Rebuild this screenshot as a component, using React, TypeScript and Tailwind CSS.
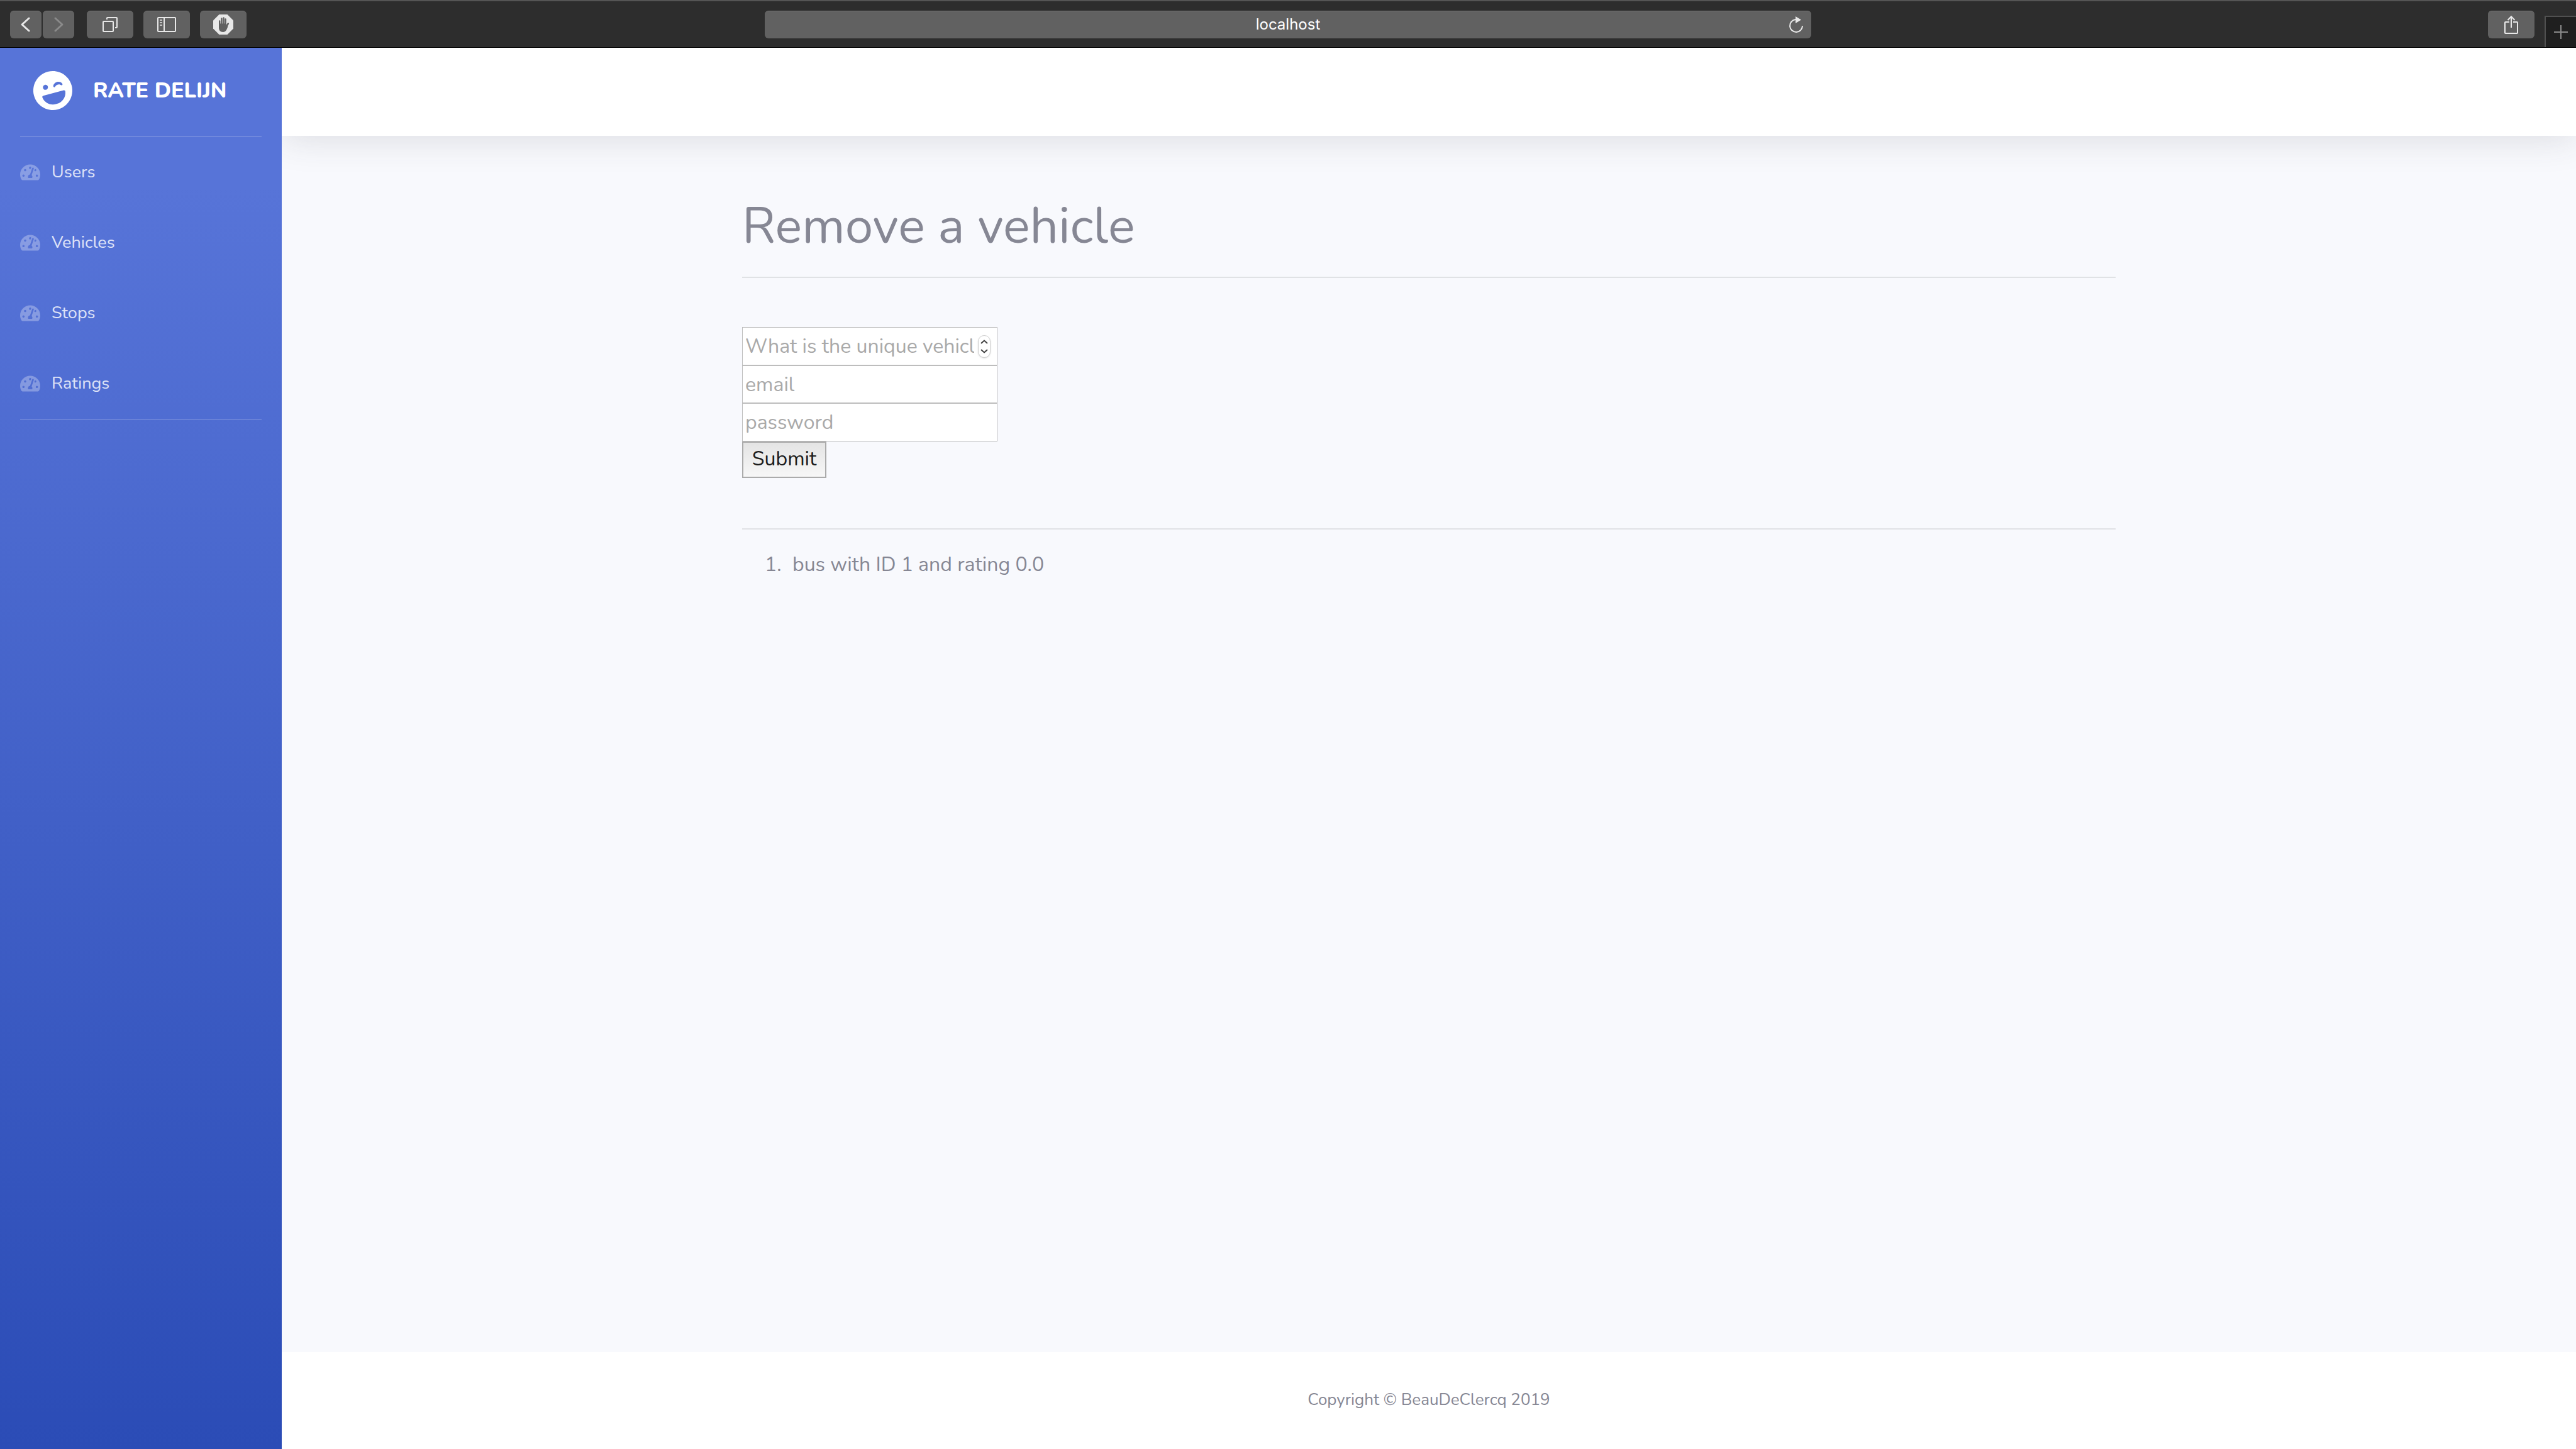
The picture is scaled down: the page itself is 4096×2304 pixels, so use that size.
import React from 'react';
import { FaLaughWink, FaTachometerAlt } from 'react-icons/fa';

const toolButton =
  'flex h-11 items-center justify-center rounded-md border-t border-[#757575] bg-[#616161] text-[#e8e8e8]';

function BrowserBar() {
  return (
    <header className="flex h-[76px] items-center border-t-2 border-b border-t-[#555555] border-b-black bg-[#2d2d2d] font-['Inter',sans-serif]">
      <div className="flex flex-1 items-center">
        <button aria-label="Back" className={`${toolButton} ml-4 w-[50px]`}>
          <svg width="20" height="28" viewBox="0 0 20 28" fill="none" stroke="currentColor" strokeWidth="3" strokeLinecap="round" strokeLinejoin="round">
            <path d="M15 4 4 14l11 10" />
          </svg>
        </button>
        <button aria-label="Forward" disabled className={`${toolButton} ml-0.5 w-[50px]`}>
          <svg width="20" height="28" viewBox="0 0 20 28" fill="none" stroke="#8a8a8a" strokeWidth="3" strokeLinecap="round" strokeLinejoin="round">
            <path d="m5 4 11 10L5 24" />
          </svg>
        </button>
        <button aria-label="Tab overview" className={`${toolButton} ml-5 w-[74px]`}>
          <svg width="24" height="24" viewBox="0 0 24 24" fill="none" stroke="currentColor" strokeWidth="2">
            <rect x="1" y="7" width="16" height="16" rx="1" />
            <path d="M7 4V2a1 1 0 0 1 1-1h14a1 1 0 0 1 1 1v14a1 1 0 0 1-1 1h-2" />
          </svg>
        </button>
        <button aria-label="Show sidebar" className={`${toolButton} ml-4 w-[74px]`}>
          <svg width="30" height="24" viewBox="0 0 30 24" fill="none" stroke="currentColor" strokeWidth="2">
            <rect x="1" y="1" width="28" height="22" rx="1" />
            <path d="M11 1v22" />
            <path d="M4 5h4M4 9h4M4 13h4" opacity=".75" />
          </svg>
        </button>
        <button aria-label="Content blocker" className={`${toolButton} ml-4 w-[74px]`}>
          <svg width="32" height="32" viewBox="0 0 32 32">
            <path d="M9.500 0h13L32 9.500v13L22.500 32h-13L0 22.500v-13z" fill="#e8e8e8" />
            <g fill="none" stroke="#616161" strokeLinecap="round">
              <path d="M10.200 18v-7.500M13.400 17V6.500M16.600 17V5.500M19.600 17V7.500" strokeWidth="2.400" />
              <path d="m20.500 20 3.300-5.500" strokeWidth="2.600" />
            </g>
            <path d="M9 14.500h11.800v5.200l1.700-2 .8 1.600C21.500 24.500 20 28 15.800 28 11 28 9 25 9 21z" fill="#616161" />
          </svg>
        </button>
      </div>

      <div className="relative flex h-11 w-[40.625%] items-center justify-center rounded-md border-t border-[#757575] bg-[#616161]">
        <span className="text-2xl text-white">localhost</span>
        <button aria-label="Reload" className="absolute right-3 text-[#e8e8e8]">
          <svg width="24" height="28" viewBox="0 0 24 28" fill="none">
            <path d="M11 6a10 10 0 1 0 11 10" stroke="currentColor" strokeWidth="2" />
            <path d="m11 1 9 5.500-9 5.500z" fill="currentColor" />
          </svg>
        </button>
      </div>

      <div className="flex flex-1 items-center justify-end gap-4 self-stretch">
        <button aria-label="Share" className={`${toolButton} w-[74px]`}>
          <svg width="22" height="30" viewBox="0 0 22 30" fill="none" stroke="currentColor" strokeWidth="2">
            <path d="M8 11H2a1 1 0 0 0-1 1v16a1 1 0 0 0 1 1h18a1 1 0 0 0 1-1V12a1 1 0 0 0-1-1h-6" />
            <path d="M11 20V2M5.500 8 11 2.300 16.500 8" />
          </svg>
        </button>
        <button aria-label="New tab" className="flex h-[50px] w-[50px] items-center justify-center self-end border-t-2 border-l-2 border-[#505050] bg-[#1f1f1f] text-[#8a8a8a]">
          <svg width="22" height="22" viewBox="0 0 22 22" stroke="currentColor" strokeWidth="2">
            <path d="M11 0v22M0 11h22" />
          </svg>
        </button>
      </div>
    </header>
  );
}

const links = ['Users', 'Vehicles', 'Stops', 'Ratings'];

function Sidebar() {
  return (
    <aside className="w-[448px] shrink-0 bg-[linear-gradient(180deg,#5774d8_10%,#2b4cb6_100%)] px-8">
      <a href="#" className="flex h-[136px] items-center gap-8 pl-5 text-white">
        <FaLaughWink size={64} className="-rotate-15" />
        <span className="text-[34px] font-extrabold whitespace-nowrap">RATE DELIJN</span>
      </a>
      <hr className="mt-1 border-t-2 border-white/15" />
      <nav>
        {links.map((label) => (
          <a key={label} href="#" className="flex h-28 items-center gap-[18px] text-[27px] text-white/80">
            <FaTachometerAlt size={32} className="text-white/30" />
            {label}
          </a>
        ))}
      </nav>
      <hr className="border-t-2 border-white/15" />
    </aside>
  );
}

const field =
  'block h-[60px] w-full border-[#bdbdbd] bg-white pl-1 text-[32px] text-black outline-none placeholder:text-[#a9a9a9] placeholder:opacity-100';

function RemoveForm() {
  return (
    <form className="mt-[78px]" onSubmit={(e) => e.preventDefault()}>
      <div className="w-[406px] border border-[#bdbdbd] bg-white">
        <div className="relative">
          <input
            type="number"
            aria-label="Vehicle ID"
            placeholder="What is the unique vehicle ID?"
            className={`${field} border-b pr-9 [appearance:textfield] [&::-webkit-inner-spin-button]:appearance-none`}
          />
          <span className="absolute top-3 right-2.5 flex h-9 w-5 flex-col items-center justify-between rounded-[10px] border border-[#cfcfcf] bg-white py-1.5 text-[#404040] shadow-sm">
            <svg width="12" height="7" viewBox="0 0 12 7" fill="none" stroke="currentColor" strokeWidth="2">
              <path d="m1 6 5-4.500L11 6" />
            </svg>
            <svg width="12" height="7" viewBox="0 0 12 7" fill="none" stroke="currentColor" strokeWidth="2">
              <path d="m1 1 5 4.500L11 1" />
            </svg>
          </span>
        </div>
        <input type="text" aria-label="Email" placeholder="email" className={`${field} border-y`} />
        <input type="password" aria-label="Password" placeholder="password" className={`${field} border-t`} />
      </div>
      <button
        type="submit"
        className="flex h-[58px] w-[134px] items-center justify-center border-2 border-[#ababab] bg-linear-to-b from-[#e4e4e4] to-[#f7f7f7] pb-0.5 text-[32px] text-[#1c1c1c]"
      >
        Submit
      </button>
    </form>
  );
}

export default function App() {
  return (
    <div className="flex min-h-screen flex-col font-['Nunito','Lato',sans-serif] text-[#868794]">
      <BrowserBar />
      <div className="flex flex-1">
        <Sidebar />
        <div className="flex flex-1 flex-col overflow-hidden bg-[#f8f9fd]">
          <div className="h-[140px] bg-white shadow-[0_5px_56px_0_rgba(58,59,69,0.15)]" />
          <main className="mx-auto w-full max-w-[2184px] flex-1 pt-24">
            <h1 className="text-[80px] leading-[96px]">Remove a vehicle</h1>
            <hr className="mt-8 border-t-2 border-[#e0e2e5]" />
            <RemoveForm />
            <hr className="mt-20 border-t-2 border-[#e0e2e5]" />
            <ol className="mt-8 pl-9 text-[32px] leading-[48px]">
              <li className="flex">
                <span className="w-11">1.</span>
                <span>bus with ID 1 and rating 0.0</span>
              </li>
            </ol>
          </main>
          <footer className="flex h-[154px] items-center justify-center bg-white pb-1 text-[26px]">
            <span>Copyright © BeauDeClercq 2019</span>
          </footer>
        </div>
      </div>
    </div>
  );
}
